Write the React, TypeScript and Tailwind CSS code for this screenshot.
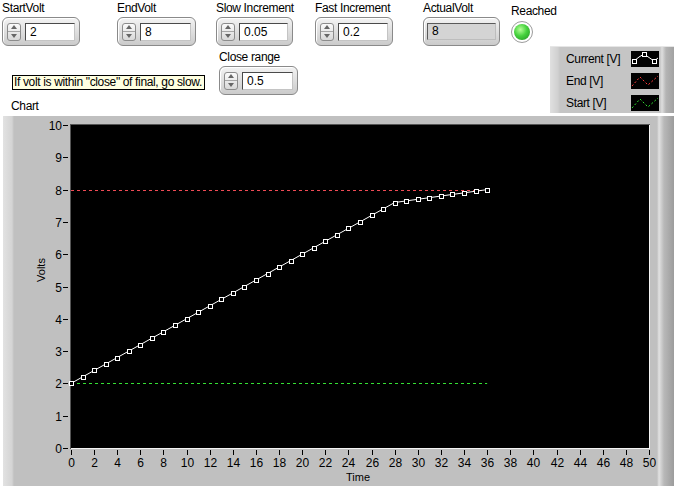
import React from "react";

/* ---------------- DATA ---------------- */

const START = 2;
const END = 8;

// volt steps: fast (0.2) until within 0.5 of END, then slow (0.05)
const current: number[] = Array.from({ length: 37 }, (_, i) =>
  i <= 28 ? START + 0.2 * i : 7.6 + 0.05 * (i - 28)
);

/* ---------------- CHART GEOMETRY (frame coords) ---------------- */

const PX0 = 68;
const PX1 = 646;
const PY0 = 332;
const PY1 = 9;
const X = (t: number) => PX0 + (t * (PX1 - PX0)) / 50;
const Y = (v: number) => PY0 - (v * (PY0 - PY1)) / 10;
const snap = (n: number) => Math.round(n) + 0.5;

/* ---------------- SMALL PARTS ---------------- */

function Spinner() {
  return (
    <div className="flex h-[18px] w-[14px] flex-col overflow-hidden rounded-[3px] border border-[#8c8c8c] bg-gradient-to-b from-[#fbfbfb] to-[#d8d8d8]">
      <div className="flex flex-1 items-center justify-center border-b border-[#a6a6a6]">
        <svg width="6" height="4">
          <path d="M0 4 L3 0 L6 4Z" fill="#666" />
        </svg>
      </div>
      <div className="flex flex-1 items-center justify-center">
        <svg width="6" height="4">
          <path d="M0 0 L3 4 L6 0Z" fill="#666" />
        </svg>
      </div>
    </div>
  );
}

function NumControl({
  label,
  value,
  className,
}: {
  label: string;
  value: string;
  className: string;
}) {
  return (
    <div className={className}>
      <div className="h-[16px] leading-[16px] whitespace-nowrap">{label}</div>
      <div className="mt-[1px] flex h-[29px] items-center rounded-[6px] border border-[#8a8a8a] bg-gradient-to-b from-[#f3f3f3] to-[#cbcbcb] px-[4px] shadow-[inset_1px_1px_0_#ffffff]">
        <Spinner />
        <div className="ml-[4px] h-[18px] flex-1 border border-t-[#4a4a4a] border-l-[#4a4a4a] border-r-[#c4c4c4] border-b-[#c4c4c4] bg-white pl-[4px] leading-[16px] tracking-normal">
          {value}
        </div>
      </div>
    </div>
  );
}

function Indicator({ label, value, className }: { label: string; value: string; className: string }) {
  return (
    <div className={className}>
      <div className="h-[16px] leading-[16px] whitespace-nowrap">{label}</div>
      <div className="mt-[1px] flex h-[29px] items-center rounded-[6px] border border-[#8a8a8a] bg-gradient-to-b from-[#f3f3f3] to-[#cbcbcb] px-[3px] shadow-[inset_1px_1px_0_#ffffff]">
        <div className="h-[17px] flex-1 border border-t-[#5a5a5a] border-l-[#5a5a5a] border-r-[#bdbdbd] border-b-[#bdbdbd] bg-[#d4d4d4] pl-[4px] leading-[15px] tracking-normal">
          {value}
        </div>
      </div>
    </div>
  );
}

function Swatch({ kind }: { kind: "current" | "end" | "start" }) {
  return (
    <svg width="28" height="16" className="block bg-black">
      {kind === "current" ? (
        <>
          <polyline points="3,10 8,6 13,3 23,10 27,7" fill="none" stroke="#fff" strokeWidth="1" />
          <rect x="1.5" y="8.5" width="4" height="4" fill="#000" stroke="#fff" />
          <rect x="11.5" y="1.5" width="4" height="4" fill="#000" stroke="#fff" />
          <rect x="21.5" y="8.5" width="4" height="4" fill="#000" stroke="#fff" />
        </>
      ) : (
        <polyline
          points="1,13 9,4 17,12 27,3"
          fill="none"
          stroke={kind === "end" ? "#ff3a3a" : "#2fe02f"}
          strokeWidth="1"
          strokeDasharray="2 2"
        />
      )}
    </svg>
  );
}

/* ---------------- CHART ---------------- */

function Chart() {
  const yTicks = Array.from({ length: 11 }, (_, i) => i);
  const xTicks = Array.from({ length: 26 }, (_, i) => i * 2);
  const pts = current.map((v, i) => `${X(i)},${Y(v)}`).join(" ");

  return (
    <svg width="671" height="370" className="block">
      {/* plot area, sunken edge */}
      <rect x={PX0} y={PY1} width={PX1 - PX0} height={PY0 - PY1} fill="#000" />
      <line x1={PX0 - 0.5} y1={PY1 - 1} x2={PX0 - 0.5} y2={PY0 + 1} stroke="#555" />
      <line x1={PX0 - 1} y1={PY1 - 0.5} x2={PX1 + 1} y2={PY1 - 0.5} stroke="#555" />
      <line x1={PX0} y1={PY0 + 0.5} x2={PX1 + 1} y2={PY0 + 0.5} stroke="#f4f4f4" />
      <line x1={PX1 + 0.5} y1={PY1} x2={PX1 + 0.5} y2={PY0 + 1} stroke="#f4f4f4" />

      {/* y axis */}
      {yTicks.map((v) => (
        <g key={`y${v}`}>
          <line x1={60} y1={snap(Y(v))} x2={65} y2={snap(Y(v))} stroke="#000" />
          <text x={59} y={Math.round(Y(v)) + 5} textAnchor="end" fontSize="12" fill="#000">
            {v}
          </text>
        </g>
      ))}

      {/* x axis */}
      {xTicks.map((t) => (
        <g key={`x${t}`}>
          <line x1={snap(X(t))} y1={334} x2={snap(X(t))} y2={339} stroke="#000" />
          <text x={Math.round(X(t)) + 0.5} y={351} textAnchor="middle" fontSize="12" fill="#000">
            {t}
          </text>
        </g>
      ))}

      <text x={355} y={365} textAnchor="middle" fontSize="11" fill="#000">
        Time
      </text>
      <text
        x={0}
        y={0}
        transform="translate(42 154) rotate(-90)"
        textAnchor="middle"
        fontSize="11"
        fill="#000"
      >
        Volts
      </text>

      {/* reference lines */}
      <line
        x1={X(0)}
        y1={snap(Y(END))}
        x2={X(36)}
        y2={snap(Y(END))}
        stroke="#f04a55"
        strokeDasharray="3 3"
      />
      <line
        x1={X(0)}
        y1={snap(Y(START))}
        x2={X(36)}
        y2={snap(Y(START))}
        stroke="#34e034"
        strokeDasharray="3 3"
      />

      {/* current volt */}
      <polyline points={pts} fill="none" stroke="#fff" strokeWidth="1" />
      {current.map((v, i) => (
        <rect
          key={i}
          x={Math.round(X(i)) - 2 + 0.5}
          y={Math.round(Y(v)) - 2 + 0.5}
          width="4"
          height="4"
          fill="#000"
          stroke="#fff"
        />
      ))}
    </svg>
  );
}

/* ---------------- PANEL ---------------- */

export default function App() {
  return (
    <div className="h-[487px] w-[674px] overflow-hidden bg-white font-['Liberation_Sans',Arial,sans-serif] text-[12px] tracking-[-0.35px] text-black">
      {/* row 1 : controls */}
      <div className="flex h-[46px] items-start">
        <NumControl label="StartVolt" value="2" className="ml-[2px] w-[78px]" />
        <NumControl label="EndVolt" value="8" className="ml-[37px] w-[79px]" />
        <NumControl label="Slow Increment" value="0.05" className="ml-[20px] w-[77px]" />
        <NumControl label="Fast Increment" value="0.2" className="ml-[22px] w-[78px]" />
        <Indicator label="ActualVolt" value="8" className="ml-[30px] w-[77px]" />
        <div className="ml-[11px]">
          <div className="pt-[3px] leading-[16px]">Reached</div>
          <div className="mt-[2px] h-[22px] w-[22px] rounded-full border border-[#9c9c9c] bg-white p-[2px]">
            <div className="h-full w-full rounded-full bg-[radial-gradient(circle_at_40%_35%,#b6ff98_0%,#46d23e_45%,#1f8e1f_100%)]" />
          </div>
        </div>
      </div>

      {/* row 2 : note, close range, legend */}
      <div className="flex h-[67px] items-start">
        <div className="w-[219px]">
          <div className="mt-[29px] ml-[12px] h-[15px] w-[193px] border border-black bg-[#ffffe1] pl-[1px] leading-[13px] whitespace-nowrap">
            If volt is within "close" of final, go slow.
          </div>
          <div className="mt-[8px] ml-[11px] leading-[16px]">Chart</div>
        </div>
        <NumControl label="Close range" value="0.5" className="pt-[3px] w-[79px]" />
        <div className="ml-auto flex h-[67px] w-[124px] flex-col gap-[6px] border-t border-t-[#e6e6e6] bg-[linear-gradient(to_right,#e0e0e0_0px,#d0d0d0_8px,#c5c5c5_10px,#c5c5c5_110px,#dedede_112px,#b4b4b4_116px,#a2a2a2_124px)] pt-[4px] pl-[16px]">
          {[
            { label: "Current [V]", kind: "current" as const },
            { label: "End [V]", kind: "end" as const },
            { label: "Start [V]", kind: "start" as const },
          ].map((row) => (
            <div key={row.label} className="flex h-[16px] items-center">
              <span className="w-[65px] whitespace-nowrap">{row.label}</span>
              <Swatch kind={row.kind} />
            </div>
          ))}
        </div>
      </div>

      {/* chart frame */}
      <div className="mt-[3px] ml-[3px] h-[370px] w-[671px] bg-[linear-gradient(to_right,#e2e2e2_0px,#d4d4d4_9px,#c0c0c0_11px,#c0c0c0_654px,#e2e2e2_656px,#b8b8b8_661px,#9c9c9c_671px)] tracking-normal">
        <Chart />
      </div>
    </div>
  );
}
